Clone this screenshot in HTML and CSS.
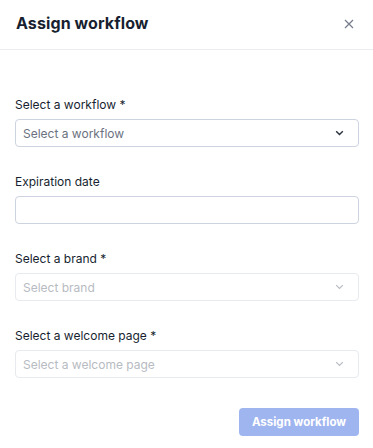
FILE: index.html
```html
<!DOCTYPE html>
<html lang="en">
<head>
    <meta charset="UTF-8">
    <meta name="viewport" content="width=device-width, initial-scale=1.0">
    <title>Assign workflow</title>
    <link rel="stylesheet" href="styles.css">
</head>
<body>
    <div class="modal">
        <header class="modal-header">
            <h2 class="modal-title">Assign workflow</h2>
            <button class="close-btn" type="button" aria-label="Close">
                <svg width="10" height="10" viewBox="0 0 10 10">
                    <path d="M1 1L9 9M9 1L1 9" stroke="currentColor" stroke-width="1.2" fill="none"/>
                </svg>
            </button>
        </header>
        <form class="modal-body">
            <div class="field">
                <label class="field-label">Select a workflow *</label>
                <div class="select">
                    <span class="placeholder">Select a workflow</span>
                    <svg class="chevron" width="9" height="6" viewBox="0 0 9 6">
                        <path d="M1.2 1.2L4.5 4.5L7.8 1.2" stroke="currentColor" stroke-width="1.4" fill="none"/>
                    </svg>
                </div>
            </div>
            <div class="field">
                <label class="field-label">Expiration date</label>
                <div class="select"></div>
            </div>
            <div class="field">
                <label class="field-label">Select a brand *</label>
                <div class="select disabled">
                    <span class="placeholder">Select brand</span>
                    <svg class="chevron" width="9" height="6" viewBox="0 0 9 6">
                        <path d="M1.2 1.2L4.5 4.5L7.8 1.2" stroke="currentColor" stroke-width="1.2" fill="none"/>
                    </svg>
                </div>
            </div>
            <div class="field">
                <label class="field-label">Select a welcome page *</label>
                <div class="select disabled">
                    <span class="placeholder">Select a welcome page</span>
                    <svg class="chevron" width="9" height="6" viewBox="0 0 9 6">
                        <path d="M1.2 1.2L4.5 4.5L7.8 1.2" stroke="currentColor" stroke-width="1.2" fill="none"/>
                    </svg>
                </div>
            </div>
            <div class="actions">
                <button class="submit-btn" type="button" disabled>Assign workflow</button>
            </div>
        </form>
    </div>
</body>
</html>
```

FILE: styles.css
```css
:root{
    --font: 'Inter', 'Open Sans', sans-serif;
    --text: hsl(222, 35%, 14%);
    --muted: hsl(220, 9%, 46%);
    --faint: hsl(220, 8%, 74%);
    --border: hsl(222, 22%, 84%);
    --border-light: hsl(220, 16%, 92%);
    --primary-soft: hsl(223, 72%, 78%);
}
*,*::before,*::after{
    box-sizing: border-box;
    margin: 0;
    padding: 0;
}
body{
    font-family: var(--font);
    background-color: #fff;
    color: var(--text);
}
.modal{
    width: 373px;
    height: 448px;
}
.modal-header{
    display: flex;
    align-items: center;
    justify-content: space-between;
    height: 50px;
    padding: 0 16px 4px 16px;
    border-bottom: 1px solid hsl(220, 14%, 93%);
}
.modal-title{
    font-size: 16px;
    font-weight: 700;
    letter-spacing: 0.1px;
}
.close-btn{
    border: none;
    background: none;
    color: hsl(220, 9%, 50%);
    display: flex;
    margin-right: 3px;
    margin-top: 2px;
}
.modal-body{
    display: flex;
    flex-direction: column;
    padding: 46px 14px 0 15px;
}
.field{
    display: flex;
    flex-direction: column;
    gap: 5px;
    margin-bottom: 26px;
}
.field-label{
    font-size: 12px;
    line-height: 18px;
}
.select{
    display: flex;
    align-items: center;
    justify-content: space-between;
    height: 28px;
    padding: 0 14px 0 7px;
    border: 1px solid var(--border);
    border-radius: 4px;
}
.placeholder{
    font-size: 12px;
    color: var(--muted);
}
.chevron{
    color: hsl(220, 20%, 20%);
}
.disabled{
    border-color: var(--border-light);
}
.disabled .placeholder,
.disabled .chevron{
    color: var(--faint);
}
.actions{
    display: flex;
    justify-content: flex-end;
    margin-top: 4px;
}
.submit-btn{
    font-family: var(--font);
    font-size: 11.5px;
    font-weight: 700;
    color: #fff;
    background-color: var(--primary-soft);
    border: none;
    border-radius: 4px;
    height: 28px;
    width: 120px;
}
```
